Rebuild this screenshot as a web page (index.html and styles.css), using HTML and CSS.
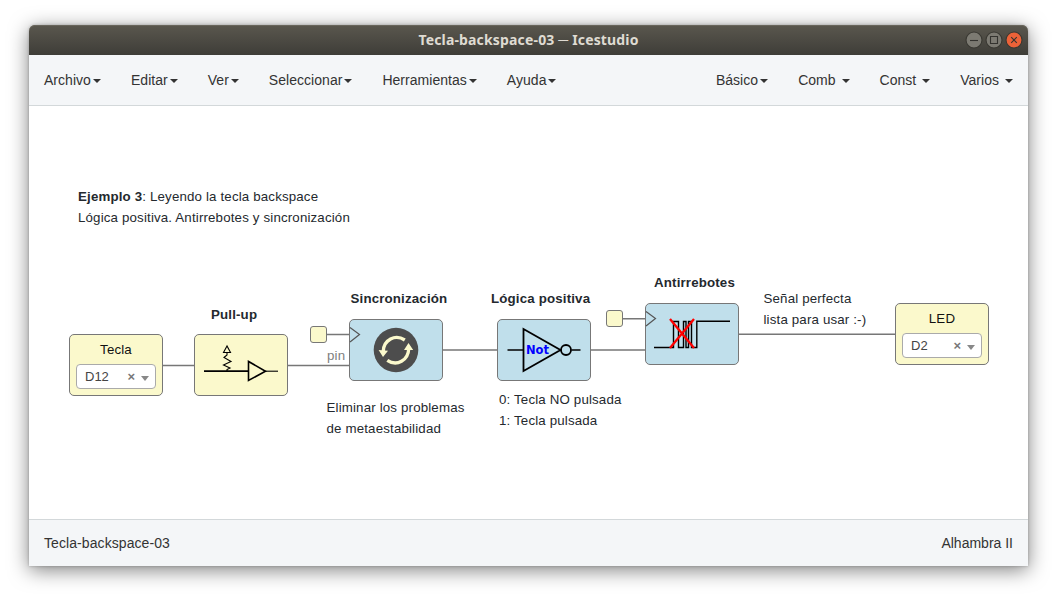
FILE: index.html
```html
<!DOCTYPE html>
<html lang="es">
<head>
<meta charset="utf-8">
<title>Tecla-backspace-03 ─ Icestudio</title>
<link rel="stylesheet" href="styles.css">
</head>
<body>
<div class="window">
  <header class="titlebar">
    <span class="title">Tecla-backspace-03 ─ Icestudio</span>
    <div class="controls">
      <svg class="control" viewBox="0 0 18 18"><circle class="ring" cx="9" cy="9" r="8"/><path d="M5 9.500h8"/></svg>
      <svg class="control" viewBox="0 0 18 18"><circle class="ring" cx="9" cy="9" r="8"/><path d="M5.500 5.500h7v7h-7z"/></svg>
      <svg class="control close" viewBox="0 0 18 18"><circle class="ring" cx="9" cy="9" r="8"/><path d="M6.200 6.200l5.600 5.600M11.800 6.200l-5.600 5.600"/></svg>
    </div>
  </header>
  <nav class="menubar">
    <div class="menu">
      <span class="item">Archivo<i class="caret"></i></span>
      <span class="item">Editar<i class="caret"></i></span>
      <span class="item">Ver<i class="caret"></i></span>
      <span class="item">Seleccionar<i class="caret"></i></span>
      <span class="item">Herramientas<i class="caret"></i></span>
      <span class="item">Ayuda<i class="caret"></i></span>
    </div>
    <div class="menu">
      <span class="item">Básico<i class="caret"></i></span>
      <span class="item">Comb <i class="caret"></i></span>
      <span class="item">Const <i class="caret"></i></span>
      <span class="item">Varios <i class="caret"></i></span>
    </div>
  </nav>
  <main class="canvas">
    <svg class="wires" viewBox="29 106 999 413">
      <path d="M162 365.500H195M287 365.500H350M326 334.500H350M442 350H498M590 350H646M622 318.700H646M738 334.300H896"/>
    </svg>

    <p class="note intro"><b>Ejemplo 3</b>: Leyendo la tecla backspace<br>Lógica positiva. Antirrebotes y sincronización</p>
    <p class="note pull"><b>Pull-up</b></p>
    <p class="note sync"><b>Sincronización</b></p>
    <p class="note logic"><b>Lógica positiva</b></p>
    <p class="note bounce"><b>Antirrebotes</b></p>
    <p class="note meta">Eliminar los problemas<br>de metaestabilidad</p>
    <p class="note values">0: Tecla NO pulsada<br>1: Tecla pulsada</p>
    <p class="note signal">Señal perfecta<br>lista para usar :-)</p>
    <span class="note port">pin</span>

    <div class="block io key">
      <span class="name">Tecla</span>
      <div class="select"><span class="value">D12</span><span class="clear">×</span><i class="arrow"></i></div>
    </div>
    <div class="block pullup">
      <svg class="art" viewBox="194 334 94 62">
        <path d="M204 371.200H248" stroke-width="1.700"/><path d="M265 371.200H278" stroke-width="1.100"/>
        <path d="M248.500 361.500V380.500L265.500 371.200Z" stroke-width="1.600"/>
        <path d="M227 346L223.500 352.500H230.500ZM227 352.500V355L224 357.500L231 361.500L223.500 365L230 368L227 369.500V371" stroke-width="1.100"/>
      </svg>
    </div>
    <div class="block logicblock syncblock">
      <svg class="art" viewBox="349 319 94 62">
        <path class="clock" d="M350 327.500L359.500 334.500L350 342"/>
        <circle cx="396" cy="350" r="22.300" fill="#4d4d4d" stroke="none"/>
        <g stroke="#fbf9cc" stroke-width="3.300">
          <path d="M404.800 340C395 333.500 383.800 340 383.300 351"/>
          <path d="M387.300 360.300C397 367 408.300 360 408.700 349"/>
        </g>
        <path d="M378.600 350L388 350.700L383 357ZM404 350L413.200 350L408.500 343Z" fill="#fbf9cc" stroke="none"/>
      </svg>
    </div>
    <div class="block logicblock notblock">
      <svg class="art" viewBox="497 319 94 62">
        <path d="M507.500 350H523M571.500 350H580.500" stroke-width="1.500"/>
        <path d="M523.500 329V371L560.500 350Z" stroke-width="1.800"/>
        <circle cx="566" cy="350" r="5" stroke-width="1.800"/>
        <text class="gate" x="526" y="354">Not</text>
      </svg>
    </div>
    <div class="block logicblock bounceblock">
      <svg class="art" viewBox="645 303 94 62">
        <path class="clock" d="M646 311.500L655.500 318.500L646 326"/>
        <path d="M654 347.500H673.500V321.500H678.500V347.500H683.500V321.500H686V347.500H688.500V321.500H691.500V347.500H696.800V321.300H730" stroke-width="1.400"/>
        <path d="M670 319L694 348M694 319L670 348" stroke="#f00" stroke-width="2.300"/>
      </svg>
    </div>
    <div class="block io led">
      <span class="name">LED</span>
      <div class="select"><span class="value">D2</span><span class="clear">×</span><i class="arrow"></i></div>
    </div>
    <i class="pin pin-sync"></i>
    <i class="pin pin-bounce"></i>
  </main>
  <footer class="status"><span class="project">Tecla-backspace-03</span><span>Alhambra II</span></footer>
</div>
</body>
</html>
```

FILE: styles.css
```css
* { box-sizing: border-box; }
body {
  margin: 0;
  padding: 25px 32px 36px 29px;
  height: 602px;
  overflow: hidden;
  background: #fff;
  color: #333;
  font-family: "Liberation Sans", Arial, sans-serif;
  font-size: 14px;
}
.window {
  display: flex;
  flex-direction: column;
  height: 541px;
  border-radius: 6px 6px 0 0;
  box-shadow: 0 4px 20px rgba(0, 0, 0, .5), 0 0 3px rgba(0, 0, 0, .25);
}
.titlebar {
  display: grid;
  grid-template-columns: 1fr auto 1fr;
  align-items: center;
  height: 30px;
  flex: none;
  border-radius: 6px 6px 0 0;
  background: linear-gradient(#5a574e, #3e3d38);
  box-shadow: inset 0 1px #69665c;
}
.title {
  grid-column: 2;
  color: #dfdbd2;
  font: bold 14px/30px "Noto Sans", sans-serif;
  letter-spacing: .16px;
  white-space: nowrap;
}
.controls { display: flex; justify-content: flex-end; gap: 2px; padding-right: 5px; }
.control { width: 18px; height: 18px; fill: none; stroke: #34332f; stroke-width: 1.1; }
.ring { fill: #7c7a72; stroke: #393832; }
.close .ring { fill: #ec6238; }
.menubar {
  display: flex;
  justify-content: space-between;
  align-items: center;
  height: 51px;
  flex: none;
  padding: 0 15px;
  background: #f4f6f8;
  border-bottom: 1px solid #d3d8da;
}
.menu { display: flex; gap: 30px; }
.item { white-space: pre; line-height: 20px; letter-spacing: .035px; }
.caret {
  display: inline-block;
  margin-left: 2px;
  vertical-align: middle;
  border: 4px solid transparent;
  border-top-color: #333;
  border-bottom: 0;
}
.canvas { position: relative; flex: 1; background: #fff; }
.wires { position: absolute; left: 0; top: 0; width: 999px; height: 413px; fill: none; stroke: #777; stroke-width: 1.4; }
.note {
  position: absolute;
  margin: 0;
  font-size: 13.3px;
  line-height: 21px;
  letter-spacing: .16px;
  white-space: nowrap;
  color: #24292e;
}
.intro { left: 49px; top: 80px; }
.pull { left: 182px; top: 198px; }
.sync { left: 321.5px; top: 182px; }
.logic { left: 462px; top: 182px; }
.bounce { left: 625px; top: 166px; }
.meta { left: 297.5px; top: 291px; }
.values { left: 470px; top: 283px; }
.signal { left: 734.5px; top: 182px; }
.port { left: 298px; top: 239px; color: #808080; }
.block {
  position: absolute;
  width: 94px;
  height: 62px;
  border: 1px solid #777;
  border-radius: 5px;
  background: #fbf9cc;
}
.logicblock { background: #c0dfeb; }
.key { left: 40px; top: 228px; }
.pullup { left: 165px; top: 228px; }
.syncblock { left: 320px; top: 213px; }
.notblock { left: 468px; top: 213px; }
.bounceblock { left: 616px; top: 197px; }
.led { left: 866px; top: 197px; }
.art { display: block; width: 94px; height: 62px; margin: -1px; fill: none; stroke: #000; }
.art .clock { stroke: #555; stroke-width: 1.2; }
.art .gate { fill: #00f; stroke: none; font: bold 11.5px "DejaVu Sans", sans-serif; }
.io { display: flex; flex-direction: column; align-items: center; padding-top: 5px; }
.name { font-size: 13.3px; line-height: 20px; color: #111; letter-spacing: .15px; }
.select {
  display: flex;
  align-items: center;
  width: 80px;
  height: 25px;
  margin-top: 4px;
  padding: 0 6px 0 8px;
  border: 1px solid #aaa;
  border-radius: 4px;
  background: #fff;
  color: #444;
  font-size: 13px;
}
.value { flex: 1; }
.clear { font-size: 13px; font-weight: bold; color: #777; margin-right: 6px; }
.arrow { border: 4px solid transparent; border-top: 5px solid #888; border-bottom: 0; margin-top: 3px; }
.pin { position: absolute; width: 17px; height: 17px; border: 1px solid #777; border-radius: 3px; background: #fbf9cc; }
.pin-sync { left: 281px; top: 220px; }
.pin-bounce { left: 577px; top: 204px; }
.status {
  display: flex;
  justify-content: space-between;
  align-items: center;
  height: 47px;
  flex: none;
  padding: 0 15px;
  background: #f4f6f8;
  border-top: 1px solid #d3d8da;
}
.project { letter-spacing: .08px; }
```
